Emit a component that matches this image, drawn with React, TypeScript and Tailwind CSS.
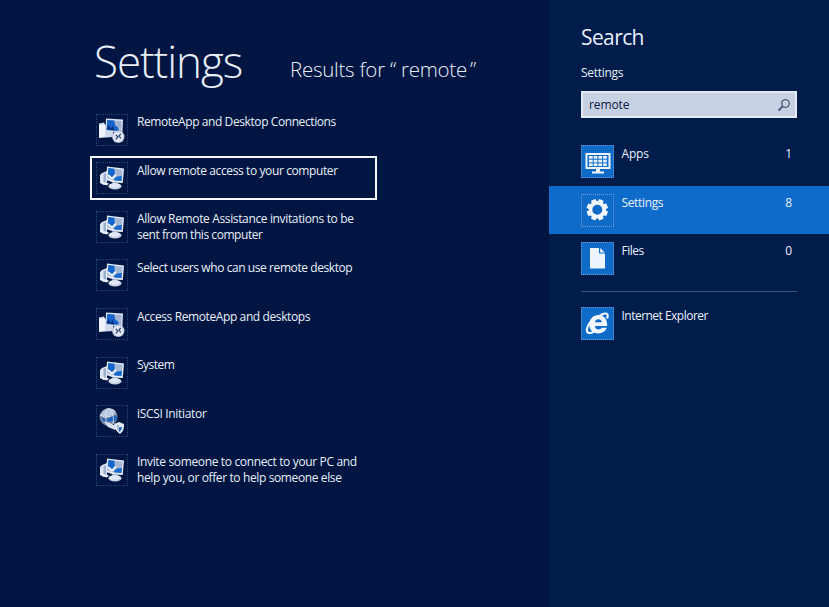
import type { ReactNode } from 'react';

type IconKind = 'remoteApp' | 'computer' | 'iscsi';

function RemoteAppIcon() {
  return (
    <svg viewBox="0 0 32 32" className="-m-px block h-8 w-8 max-w-none">
      <path d="M3 9.500l5-1 1 2.500h8v12l-14 1z" fill="#cfd9eb" />
      <path d="M3 11l6-1v12.500l-6 1z" fill="#f1f5fb" />
      <path d="M10 4.500l17 1-.6 13.500-17-2z" fill="#dbe3f1" />
      <path d="M11.200 6l14.500.9-.6 10.500-14.500-1.200z" fill="#a3b4d3" />
      <path d="M11.200 6l7 .4 1 5 3 2 .5 3.700-12.100-1z" fill="#1764c9" />
      <path d="M10.600 15l2-4 2 4 2-3 2 4.500z" fill="#062c78" />
      <circle cx="22.300" cy="22.800" r="6.200" fill="#b4c1da" />
      <circle cx="22.300" cy="22.800" r="5.400" fill="#dfe5f1" />
      <path d="M19.800 20.800l2 2.200-2 2.400M24.800 19.800l-1.900 2.200 1.900 2.400" fill="none" stroke="#24406f" strokeWidth="1.200" />
    </svg>
  );
}

function ComputerIcon() {
  return (
    <svg viewBox="0 0 32 32" className="-m-px block h-8 w-8 max-w-none">
      <path d="M4 13l2-2 5-2v12l-3 2-4-2z" fill="#dce4f2" />
      <path d="M7.500 12l2.500-1v10l-2.500 1z" fill="#9dafcf" />
      <path d="M11 4.500l17 2-1.200 14.500-9.300-.5-7.500-2.500z" fill="#e2e9f5" />
      <path d="M12.300 6l14.200 1.700-1 11.300-8-.7-6.200-1.800z" fill="#a6b7d6" />
      <path d="M12.300 6l6 .7.500 5.300-3 4-4-2z" fill="#1466cc" />
      <path d="M18 17l3-2.500 4.900-.5-.4 5-7-.5z" fill="#1769cf" />
      <path d="M12 13l4 3.500 4-4" fill="none" stroke="#f4f7fc" strokeWidth="1.700" />
      <path d="M16.500 20h5v4h-5z" fill="#a7b7d4" />
      <ellipse cx="19" cy="24.200" rx="6.500" ry="3.200" fill="#c9d4e7" />
      <ellipse cx="18.500" cy="23.500" rx="5.500" ry="2.200" fill="#e3e9f4" />
      <path d="M5 19.500l8 2-2 2-5-1.500z" fill="#eef3fb" />
    </svg>
  );
}

function IscsiIcon() {
  return (
    <svg viewBox="0 0 32 32" className="-m-px block h-8 w-8 max-w-none">
      <circle cx="12.500" cy="12" r="9" fill="#71849f" />
      <path d="M4 11c2-6 8-9 13-7l3 3-7 5z" fill="#b9c6df" />
      <path d="M5 13l6 1.500 6-4 4 1-1 4-7 1-6-1z" fill="#1763c2" />
      <path d="M4 10q8 5 16-2M12 3q-5 8 0 18M13 3q6 7 4 16" fill="none" stroke="#e0e8f5" strokeWidth=".8" />
      <path d="M8 17l6 1 7 4-2 3-7-3z" fill="#d8e0ef" />
      <path d="M18 19l5-2 5 2q.5 7-4 10-5-3-6-10z" fill="#e3e9f4" />
      <path d="M20.500 20.500l2.500-1v7q-2.300-2-2.500-6z" fill="#a9b7d1" />
      <path d="M23 22.500l3-.5q0 3-3 5z" fill="#155fbd" />
    </svg>
  );
}

function ResultIcon({ kind }: { kind: IconKind }) {
  return (
    <span className="block h-8 w-8 shrink-0 border border-dotted border-[#27477b]">
      {kind === 'remoteApp' ? <RemoteAppIcon /> : kind === 'iscsi' ? <IscsiIcon /> : <ComputerIcon />}
    </span>
  );
}

const results: { icon: IconKind; lines: { text: string; track: string }[]; selected?: boolean }[] = [
  { icon: 'remoteApp', lines: [{ text: 'RemoteApp and Desktop Connections', track: 'tracking-[-0.410px]' }] },
  { icon: 'computer', selected: true, lines: [{ text: 'Allow remote access to your computer', track: 'tracking-[-0.390px]' }] },
  {
    icon: 'computer',
    lines: [
      { text: 'Allow Remote Assistance invitations to be', track: 'tracking-[-0.360px]' },
      { text: 'sent from this computer', track: 'tracking-[-0.450px]' },
    ],
  },
  { icon: 'computer', lines: [{ text: 'Select users who can use remote desktop', track: 'tracking-[-0.420px]' }] },
  { icon: 'remoteApp', lines: [{ text: 'Access RemoteApp and desktops', track: 'tracking-[-0.390px]' }] },
  { icon: 'computer', lines: [{ text: 'System', track: 'tracking-[-0.500px]' }] },
  { icon: 'iscsi', lines: [{ text: 'iSCSI Initiator', track: 'tracking-[-0.320px]' }] },
  {
    icon: 'computer',
    lines: [
      { text: 'Invite someone to connect to your PC and', track: 'tracking-[-0.350px]' },
      { text: 'help you, or offer to help someone else', track: 'tracking-[-0.380px]' },
    ],
  },
];

function Tile({ children }: { children: ReactNode }) {
  return (
    <span className="block h-[33px] w-[33px] shrink-0 border border-dotted border-[#6f9bd2] bg-[#0f6bc8]">{children}</span>
  );
}

function AppsIcon() {
  return (
    <svg viewBox="0 0 31 31" className="block h-full w-full">
      <rect x="4.500" y="8" width="23" height="14" fill="none" stroke="#eef4fd" strokeWidth="2" />
      <g fill="#eef4fd">
        {[7, 11.7, 16.4, 21.1].map((x) =>
          [10, 13.7, 17.4].map((y) => <rect key={`${x}-${y}`} x={x} y={y} width="3.700" height="2.700" />),
        )}
        <path d="M14 23h4v2.500h4v2H10v-2h4z" />
      </g>
    </svg>
  );
}

function GearIcon() {
  return (
    <svg viewBox="0 0 31 31" className="block h-full w-full">
      <g fill="#f2f7fe">
        {[22.5, 67.5, 112.5, 157.5, 202.5, 247.5, 292.5, 337.5].map((a) => (
          <path key={a} d="M13 4h4.600l.8 4.500h-6.200z" transform={`rotate(${a} 15.300 14.700)`} />
        ))}
      </g>
      <circle cx="15.300" cy="14.700" r="6.800" fill="none" stroke="#f2f7fe" strokeWidth="3.600" />
    </svg>
  );
}

function FileIcon() {
  return (
    <svg viewBox="0 0 31 31" className="block h-full w-full">
      <path d="M8 5h9v5.500h6v15H8z" fill="#eef4fd" />
      <path d="M18.200 5l4.600 4.500h-4.600z" fill="#eef4fd" />
    </svg>
  );
}

function ExplorerIcon() {
  return (
    <svg viewBox="0 0 31 31" className="block h-full w-full">
      <path
        d="M24.800 19.800c-1.500 3.600-4.600 5.700-8.500 5.700-5.200 0-9-3.700-9-9S11.200 7 16.500 7c5.700 0 9 4.300 8.700 11H12.900c.2 2.200 1.500 3.400 3.600 3.400 1.500 0 2.500-.5 3.200-1.600zM12.900 14.300h6.900c-.1-1.900-1.500-3-3.400-3s-3.200 1.200-3.500 3z"
        fill="#f2f7fe"
        fillRule="evenodd"
      />
      <path
        d="M25 10.500c1.100-2.600.9-4.300-.4-4.800-1.500-.5-4.200.3-7 2.100M8.300 14C5.200 18.500 4.200 22.700 5.700 24.400c1.100 1.100 3.600.6 6.700-1"
        fill="none"
        stroke="#f2f7fe"
        strokeWidth="2.200"
      />
    </svg>
  );
}

function ScopeRow({
  icon,
  label,
  track,
  count,
  active,
}: {
  icon: ReactNode;
  label: string;
  track: string;
  count?: string;
  active?: boolean;
}) {
  return (
    <div
      className={`flex h-[48.600px] items-start pr-[37px] pl-8 pt-2 text-[12px] leading-[18px] ${active ? 'bg-[#0f6bc9]' : ''}`}
    >
      <Tile>{icon}</Tile>
      <span className={`ml-[7.500px] flex-1 ${track}`}>{label}</span>
      {count && <span>{count}</span>}
    </div>
  );
}

export default function App() {
  return (
    <div className="flex h-[607px] w-[829px] overflow-hidden bg-[#001541] font-['Open_Sans','Noto_Sans',sans-serif] text-[#e9effa]">
      <main className="w-[549px] shrink-0">
        <header className="flex h-[105px] items-baseline pt-[31px] pl-[94px] font-light whitespace-nowrap">
          <h1 className="w-[196px] text-[44px] leading-[60px] tracking-[-1.100px]">Settings</h1>
          <p className="-mt-px text-[20.500px] leading-7 tracking-[-0.250px]">
            <span className="relative -top-px">
              Results for “ remote<span className="ml-[3px]">”</span>
            </span>
          </p>
        </header>
        <ul className="pl-[90px]">
          {results.map((r) => (
            <li key={r.lines[0].text} className="h-[48.670px] pt-[2.500px]">
              <div
                className={`flex h-11 w-[287px] border-2 pt-[4px] pl-[4px] ${r.selected ? 'border-[#f4f7fc]' : 'border-transparent'}`}
              >
                <ResultIcon kind={r.icon} />
                <div className="ml-[9px] pt-[0.400px] text-[12px] leading-4 whitespace-nowrap">
                  {r.lines.map((l) => (
                    <div key={l.text}>
                      <span className={l.track}>{l.text}</span>
                    </div>
                  ))}
                </div>
              </div>
            </li>
          ))}
        </ul>
      </main>
      <aside className="w-[280px] bg-[#001c4b]">
        <div className="h-[137px] pt-[22px] pr-8 pl-8">
          <h2 className="text-[21px] leading-[30px] tracking-[-0.600px]">Search</h2>
          <p className="mt-[13px] text-[12px] leading-4 tracking-[-0.300px]">Settings</p>
          <div className="mt-[10px] flex h-[27px] w-[216px] items-center justify-between border-2 border-[#e4eaf5] bg-[#c8d1e4] pt-px pr-1 pl-1.5 text-[12px] text-[#0b1c45]">
            <span className="tracking-[-0.100px]">remote</span>
            <svg viewBox="0 0 14 14" className="h-3.5 w-3.5" fill="none" stroke="#4c5a7c">
              <circle cx="8.500" cy="5.500" r="3.800" strokeWidth="1.300" />
              <path d="M5.800 8.200L1.500 12.500" strokeWidth="1.900" />
            </svg>
          </div>
        </div>
        <nav>
          <ScopeRow icon={<AppsIcon />} label="Apps" track="tracking-[-0.200px]" count="1" />
          <ScopeRow icon={<GearIcon />} label="Settings" track="tracking-[-0.350px]" count="8" active />
          <ScopeRow icon={<FileIcon />} label="Files" track="tracking-[-0.500px]" count="0" />
          <div className="mr-8 ml-8 mt-2 mb-[7px] h-px bg-[#34507f]" />
          <ScopeRow icon={<ExplorerIcon />} label="Internet Explorer" track="tracking-[-0.520px]" />
        </nav>
      </aside>
    </div>
  );
}
